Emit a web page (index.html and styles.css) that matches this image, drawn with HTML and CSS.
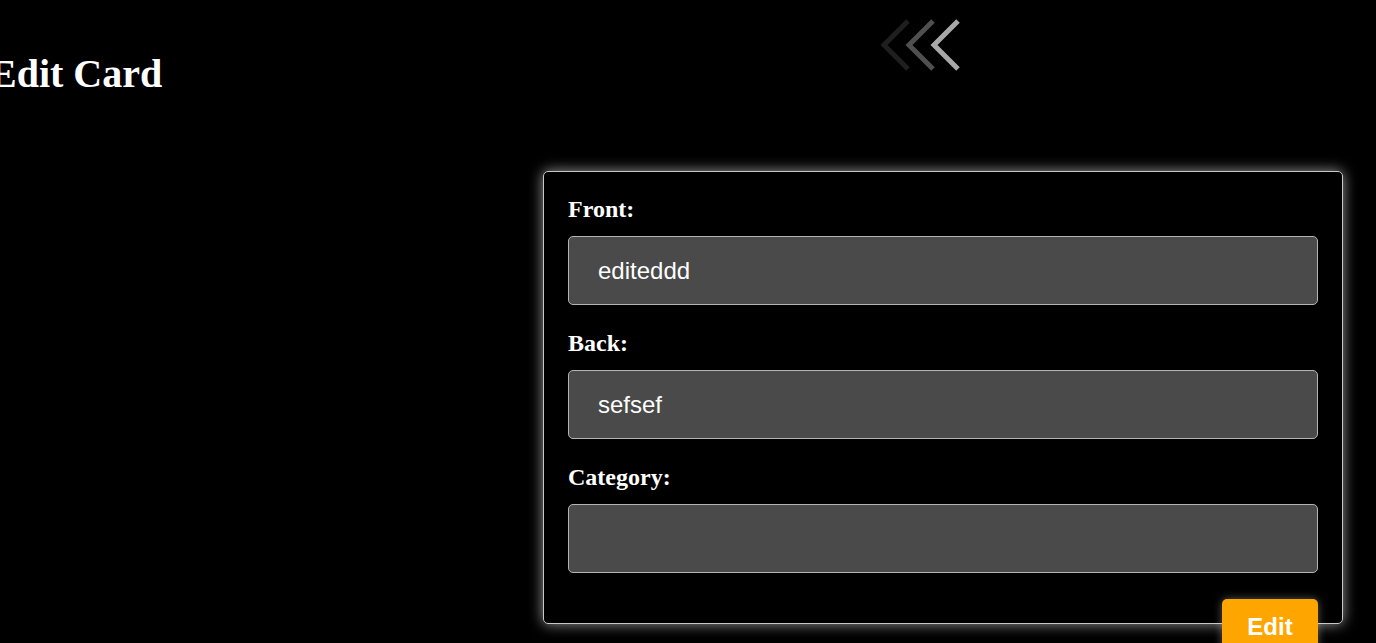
FILE: index.html
```html
<!DOCTYPE html>
<html lang="en">
<head>
<meta charset="utf-8">
<title>Edit Card</title>
<link rel="stylesheet" href="styles.css">
</head>
<body>
  <header class="header">
    <h1 class="title">Edit Card</h1>
    <svg class="chevrons" width="100" height="60" viewBox="0 0 100 60" aria-hidden="true">
      <polyline points="38,6 14,30 38,54" fill="none" stroke="#1f1f1f" stroke-width="5"/>
      <polyline points="63,6 39,30 63,54" fill="none" stroke="#4f4f4f" stroke-width="5"/>
      <polyline points="88,6 64,30 88,54" fill="none" stroke="#a8a8a8" stroke-width="5"/>
    </svg>
  </header>
  <main class="main">
    <form class="card">
      <div class="field">
        <label class="label" for="front">Front:</label>
        <input class="input" id="front" type="text" value="editeddd">
      </div>
      <div class="field">
        <label class="label" for="back">Back:</label>
        <input class="input" id="back" type="text" value="sefsef">
      </div>
      <div class="field">
        <label class="label" for="category">Category:</label>
        <input class="input" id="category" type="text" value="">
      </div>
      <div class="actions">
        <button class="btn" type="button">Edit</button>
      </div>
    </form>
  </main>
</body>
</html>
```
FILE: styles.css
```css
html, body {
  margin: 0;
  padding: 0;
  background: #000;
  overflow: hidden;
}
body {
  width: 1376px;
  height: 643px;
  color: #fff;
  font-family: "Liberation Serif", "Times New Roman", serif;
}
.header {
  display: grid;
  grid-template-columns: 870px 100px;
  align-items: start;
  height: 171px;
}
.title {
  margin: 51px 0 0 -10px;
  font-size: 40px;
  line-height: 46px;
  font-weight: bold;
  white-space: nowrap;
}
.chevrons {
  display: block;
  margin-top: 15px;
}
.main {
  padding-left: 543px;
}
.card {
  box-sizing: border-box;
  width: 800px;
  height: 453px;
  border: 1px solid #c8c8c8;
  border-radius: 5px;
  box-shadow: 0 0 14px rgba(255, 255, 255, 0.6);
  padding: 23px 24px 0 24px;
  display: flex;
  flex-direction: column;
  gap: 24px;
}
.field {
  display: flex;
  flex-direction: column;
}
.label {
  font-size: 24px;
  line-height: 28px;
  font-weight: bold;
  margin-bottom: 13px;
}
.input {
  box-sizing: border-box;
  width: 100%;
  height: 69px;
  margin: 0;
  padding: 0 29px;
  background: #4a4a4a;
  border: 1px solid #b4b4b4;
  border-radius: 5px;
  color: #fff;
  font-family: "Liberation Sans", Arial, sans-serif;
  font-size: 24px;
  outline: none;
}
.field + .field .label {
  line-height: 29px;
  margin-bottom: 12px;
}
.actions {
  display: flex;
  justify-content: flex-end;
  margin-top: 2px;
}
.btn {
  box-sizing: border-box;
  width: 96px;
  padding: 14px 0;
  background: #ffa500;
  color: #fff;
  border: none;
  border-radius: 5px;
  font-family: "Liberation Sans", Arial, sans-serif;
  font-size: 24px;
  line-height: 27px;
  font-weight: bold;
  text-align: center;
  box-shadow: 0 0 8px rgba(255, 255, 255, 0.35);
}
```
